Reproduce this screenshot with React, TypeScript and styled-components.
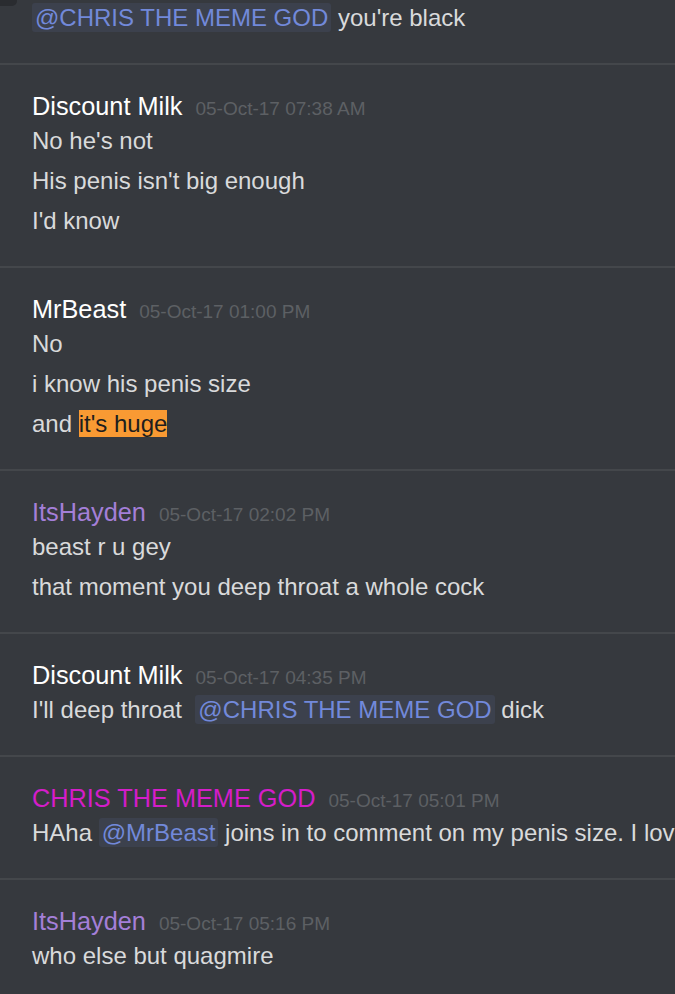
import React from "react";
import styled, { createGlobalStyle } from "styled-components";

const Global = createGlobalStyle`
  html, body { margin: 0; padding: 0; background: #36393e; }
  body { font-family: "Liberation Sans", Arial, sans-serif; overflow: hidden; }
`;

const Page = styled.div`
  position: relative;
  width: 675px;
  height: 994px;
  overflow: hidden;
  background: #36393e;
`;

const Feed = styled.div`
  display: flex;
  flex-direction: column;
  margin-top: -2px;
`;

const Corner = styled.div`
  position: absolute;
  left: 0;
  top: 0;
  width: 17px;
  height: 6px;
  background: #2a2c30;
  border-bottom-right-radius: 5px;
`;

const Group = styled.div<{ $first?: boolean }>`
  display: flex;
  flex-direction: column;
  padding: ${(p) => (p.$first ? "0" : "26px")} 0 25px 32px;
  border-bottom: 2px solid #44474b;
  &:last-child { border-bottom: none; }
`;

const Header = styled.div`
  display: flex;
  align-items: baseline;
  height: 30px;
  line-height: 30px;
  white-space: nowrap;
`;

const Name = styled.span<{ $color: string }>`
  font-size: 25.3px;
  color: ${(p) => p.$color};
`;

const Time = styled.span`
  margin-left: 13px;
  font-size: 19px;
  color: #5d6064;
`;

const Line = styled.div`
  font-size: 24px;
  line-height: 40px;
  height: 40px;
  color: #d9dadb;
  white-space: pre;
`;

const Mention = styled.span`
  color: #7289da;
  background: rgba(114, 137, 218, 0.1);
  padding: 1px 3px;
  border-radius: 3px;
`;

const Highlight = styled.span`
  background: #f99a33;
  color: #1e1e1e;
`;

type Msg = {
  name?: string;
  color?: string;
  time?: string;
  lines: React.ReactNode[];
};

const messages: Msg[] = [
  {
    lines: [
      <>
        <Mention>@CHRIS THE MEME GOD</Mention> you're black
      </>,
    ],
  },
  {
    name: "Discount Milk",
    color: "#ffffff",
    time: "05-Oct-17 07:38 AM",
    lines: ["No he's not", "His penis isn't big enough", "I'd know"],
  },
  {
    name: "MrBeast",
    color: "#ffffff",
    time: "05-Oct-17 01:00 PM",
    lines: [
      "No",
      "i know his penis size",
      <>
        and <Highlight>it's huge</Highlight>
      </>,
    ],
  },
  {
    name: "ItsHayden",
    color: "#a47fd8",
    time: "05-Oct-17 02:02 PM",
    lines: ["beast r u gey", "that moment you deep throat a whole cock"],
  },
  {
    name: "Discount Milk",
    color: "#ffffff",
    time: "05-Oct-17 04:35 PM",
    lines: [
      <>
        I'll deep throat  <Mention>@CHRIS THE MEME GOD</Mention> dick
      </>,
    ],
  },
  {
    name: "CHRIS THE MEME GOD",
    color: "#d41dc9",
    time: "05-Oct-17 05:01 PM",
    lines: [
      <>
        HAha <Mention>@MrBeast</Mention> joins in to comment on my penis size. I love it
      </>,
    ],
  },
  {
    name: "ItsHayden",
    color: "#a47fd8",
    time: "05-Oct-17 05:16 PM",
    lines: ["who else but quagmire"],
  },
];

export default function App() {
  return (
    <Page>
      <Global />
      <Feed>
        {messages.map((m, i) => (
          <Group key={i} $first={!m.name}>
            {m.name && (
              <Header>
                <Name $color={m.color || "#fff"}>{m.name}</Name>
                <Time>{m.time}</Time>
              </Header>
            )}
            {m.lines.map((l, j) => (
              <Line key={j}>{l}</Line>
            ))}
          </Group>
        ))}
      </Feed>
      <Corner />
    </Page>
  );
}
